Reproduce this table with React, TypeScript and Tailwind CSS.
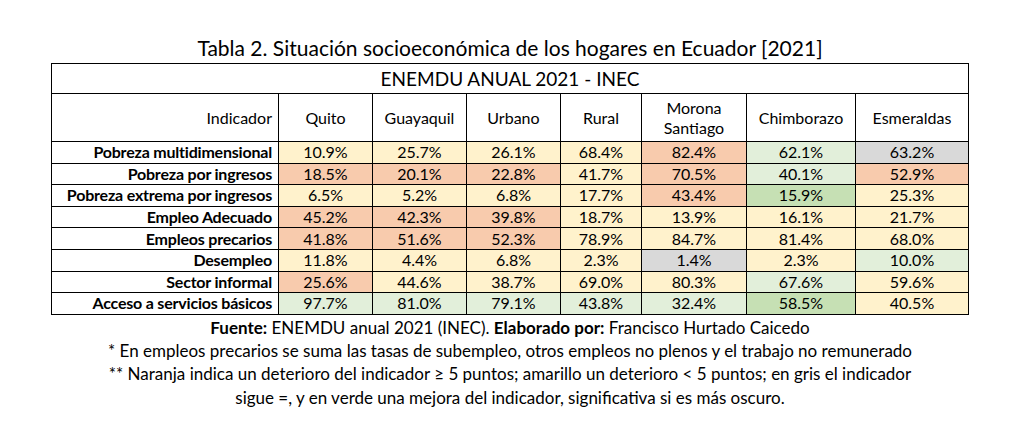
const columns = [
  { name: 'Quito', w: 'w-[94px]' },
  { name: 'Guayaquil', w: 'w-[94px]' },
  { name: 'Urbano', w: 'w-[94px]' },
  { name: 'Rural', w: 'w-[81px]' },
  { name: 'Morona Santiago', w: 'w-[105px]' },
  { name: 'Chimborazo', w: 'w-[109px]' },
  { name: 'Esmeraldas', w: 'w-[113px]' },
];

// o = orange, y = yellow, g = light green, G = dark green, x = gray
const tone: Record<string, string> = {
  o: 'bg-[#f8cbad]',
  y: 'bg-[#fff2cc]',
  g: 'bg-[#e2efda]',
  G: 'bg-[#c6e0b4]',
  x: 'bg-[#d9d9d9]',
};

const rows: { label: string; values: [string, string][] }[] = [
  { label: 'Pobreza multidimensional', values: [['10.9%', 'y'], ['25.7%', 'y'], ['26.1%', 'y'], ['68.4%', 'y'], ['82.4%', 'o'], ['62.1%', 'g'], ['63.2%', 'x']] },
  { label: 'Pobreza por ingresos', values: [['18.5%', 'o'], ['20.1%', 'o'], ['22.8%', 'o'], ['41.7%', 'y'], ['70.5%', 'o'], ['40.1%', 'g'], ['52.9%', 'o']] },
  { label: 'Pobreza extrema por ingresos', values: [['6.5%', 'y'], ['5.2%', 'y'], ['6.8%', 'y'], ['17.7%', 'y'], ['43.4%', 'o'], ['15.9%', 'G'], ['25.3%', 'y']] },
  { label: 'Empleo Adecuado', values: [['45.2%', 'o'], ['42.3%', 'o'], ['39.8%', 'o'], ['18.7%', 'y'], ['13.9%', 'y'], ['16.1%', 'y'], ['21.7%', 'y']] },
  { label: 'Empleos precarios', values: [['41.8%', 'o'], ['51.6%', 'o'], ['52.3%', 'o'], ['78.9%', 'y'], ['84.7%', 'y'], ['81.4%', 'y'], ['68.0%', 'y']] },
  { label: 'Desempleo', values: [['11.8%', 'y'], ['4.4%', 'y'], ['6.8%', 'y'], ['2.3%', 'y'], ['1.4%', 'x'], ['2.3%', 'y'], ['10.0%', 'g']] },
  { label: 'Sector informal', values: [['25.6%', 'o'], ['44.6%', 'y'], ['38.7%', 'y'], ['69.0%', 'y'], ['80.3%', 'y'], ['67.6%', 'g'], ['59.6%', 'y']] },
  { label: 'Acceso a servicios básicos', values: [['97.7%', 'g'], ['81.0%', 'g'], ['79.1%', 'g'], ['43.8%', 'g'], ['32.4%', 'g'], ['58.5%', 'G'], ['40.5%', 'y']] },
];

export default function App() {
  return (
    <div className="w-[1020px] h-[423px] bg-white text-black font-['Lato','Open_Sans',sans-serif] flex flex-col items-center pt-[35px]">
      <h1 className="text-[21px] leading-[26px] mb-[2px]">
        Tabla 2. Situación socioeconómica de los hogares en Ecuador [2021]
      </h1>

      <table className="border-collapse border border-black text-[16px] table-fixed w-[918px]">
        <colgroup>
          <col className="w-[227px]" />
          {columns.map((c) => (
            <col key={c.name} className={c.w} />
          ))}
        </colgroup>
        <thead>
          <tr>
            <th colSpan={8} className="border border-black h-[30px] font-normal text-[19px] leading-none text-center">
              ENEMDU ANUAL 2021 - INEC
            </th>
          </tr>
          <tr>
            <th className="border border-black h-[48px] font-normal text-right pr-[6px]">Indicador</th>
            {columns.map((c) => (
              <th key={c.name} className="border border-black font-normal leading-[20px] text-center">
                {c.name === 'Morona Santiago' ? (
                  <>Morona<br />Santiago</>
                ) : (
                  c.name
                )}
              </th>
            ))}
          </tr>
        </thead>
        <tbody>
          {rows.map((r) => (
            <tr key={r.label} className="h-[21.6px]">
              <td className="border border-black text-right font-bold pr-[6px] leading-none whitespace-nowrap tracking-[-0.2px]">{r.label}</td>
              {r.values.map(([v, t], i) => (
                <td key={i} className={`border border-black text-center leading-none ${tone[t]}`}>
                  {v}
                </td>
              ))}
            </tr>
          ))}
        </tbody>
      </table>

      <div className="text-[17px] leading-[23.3px] text-center mt-[1px]">
        <p>
          <b>Fuente:</b> ENEMDU anual 2021 (INEC). <b>Elaborado por:</b> Francisco Hurtado Caicedo
        </p>
        <p>* En empleos precarios se suma las tasas de subempleo, otros empleos no plenos y el trabajo no remunerado</p>
        <p>
          ** Naranja indica un deterioro del indicador ≥ 5 puntos; amarillo un deterioro &lt; 5 puntos; en gris el indicador
          <br />
          sigue =, y en verde una mejora del indicador, significativa si es más oscuro.
        </p>
      </div>
    </div>
  );
}
